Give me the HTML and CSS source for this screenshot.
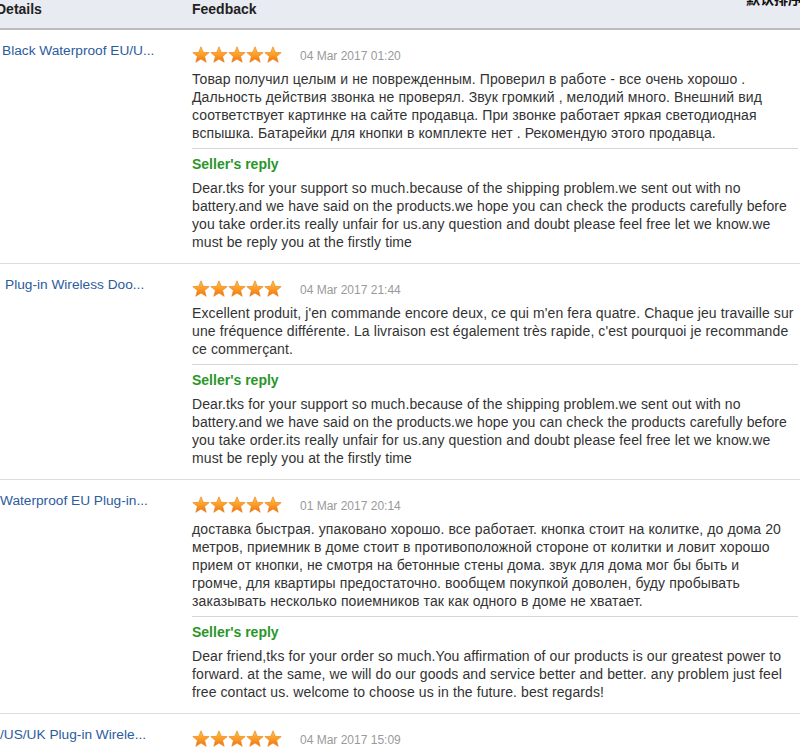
FILE: index.html
```html
<!DOCTYPE html>
<html>
<head>
<meta charset="utf-8">
<link rel="stylesheet" href="styles.css">
</head>
<body>
<svg width="0" height="0" class="defs">
  <defs>
    <linearGradient id="sg" x1="0" y1="0" x2="0" y2="1">
      <stop offset="0" stop-color="#ffc24a"/>
      <stop offset="0.55" stop-color="#fb9a24"/>
      <stop offset="1" stop-color="#ee6f12"/>
    </linearGradient>
    <symbol id="star" viewBox="0 0 18 18">
      <path d="M9 0.8 L11.3 6.3 L17.2 6.6 L12.6 10.4 L14.2 16.3 L9 13.1 L3.8 16.3 L5.4 10.4 L0.8 6.6 L6.7 6.3 Z" fill="url(#sg)" stroke="#e8801c" stroke-width="0.6" stroke-linejoin="round"/>
    </symbol>
  </defs>
</svg>
<div class="page">
  <div class="head">
    <div class="h-details">Details</div>
    <div class="h-feedback">Feedback</div>
    <div class="sort">默认排序</div>
  </div>

  <div class="row">
    <div class="title t1">Black Waterproof EU/U...</div>
    <div class="fb">
      <div class="meta">
        <span class="stars"><svg><use href="#star"/></svg><svg><use href="#star"/></svg><svg><use href="#star"/></svg><svg><use href="#star"/></svg><svg><use href="#star"/></svg></span>
        <span class="date">04 Mar 2017 01:20</span>
      </div>
      <div class="text">Товар получил целым и не поврежденным. Проверил в работе - все очень хорошо . Дальность действия звонка не проверял. Звук громкий , мелодий много. Внешний вид соответствует картинке на сайте продавца. При звонке работает яркая светодиодная вспышка. Батарейки для кнопки в комплекте нет . Рекомендую этого продавца.</div>
      <div class="reply">
        <div class="reply-h">Seller's reply</div>
        <div class="text">Dear.tks for your support so much.because of the shipping problem.we sent out with no battery.and we have said on the products.we hope you can check the products carefully before you take order.its really unfair for us.any question and doubt please feel free let we know.we must be reply you at the firstly time</div>
      </div>
    </div>
  </div>

  <div class="row">
    <div class="title t2">Plug-in Wireless Doo...</div>
    <div class="fb">
      <div class="meta">
        <span class="stars"><svg><use href="#star"/></svg><svg><use href="#star"/></svg><svg><use href="#star"/></svg><svg><use href="#star"/></svg><svg><use href="#star"/></svg></span>
        <span class="date">04 Mar 2017 21:44</span>
      </div>
      <div class="text">Excellent produit, j'en commande encore deux, ce qui m'en fera quatre. Chaque jeu travaille sur une fréquence différente. La livraison est également très rapide, c'est pourquoi je recommande ce commerçant.</div>
      <div class="reply">
        <div class="reply-h">Seller's reply</div>
        <div class="text">Dear.tks for your support so much.because of the shipping problem.we sent out with no battery.and we have said on the products.we hope you can check the products carefully before you take order.its really unfair for us.any question and doubt please feel free let we know.we must be reply you at the firstly time</div>
      </div>
    </div>
  </div>

  <div class="row">
    <div class="title t3">Waterproof EU Plug-in...</div>
    <div class="fb">
      <div class="meta">
        <span class="stars"><svg><use href="#star"/></svg><svg><use href="#star"/></svg><svg><use href="#star"/></svg><svg><use href="#star"/></svg><svg><use href="#star"/></svg></span>
        <span class="date">01 Mar 2017 20:14</span>
      </div>
      <div class="text">доставка быстрая. упаковано хорошо. все работает. кнопка стоит на колитке, до дома 20 метров, приемник в доме стоит в противоположной стороне от колитки и ловит хорошо прием от кнопки, не смотря на бетонные стены дома. звук для дома мог бы быть и<br>громче, для квартиры предостаточно. вообщем покупкой доволен, буду пробывать заказывать несколько поиемников так как одного в доме не хватает.</div>
      <div class="reply">
        <div class="reply-h">Seller's reply</div>
        <div class="text">Dear friend,tks for your order so much.You affirmation of our products is our greatest power to forward. at the same, we will do our goods and service better and better. any problem just feel free contact us. welcome to choose us in the future. best regards!</div>
      </div>
    </div>
  </div>

  <div class="row">
    <div class="title t4">/US/UK Plug-in Wirele...</div>
    <div class="fb">
      <div class="meta">
        <span class="stars"><svg><use href="#star"/></svg><svg><use href="#star"/></svg><svg><use href="#star"/></svg><svg><use href="#star"/></svg><svg><use href="#star"/></svg></span>
        <span class="date">04 Mar 2017 15:09</span>
      </div>
    </div>
  </div>
</div>
</body>
</html>
```

FILE: styles.css
```css
html, body {
  margin: 0;
  padding: 0;
  background: #fff;
  overflow: hidden;
}
.defs {
  position: absolute;
  width: 0;
  height: 0;
}
.page {
  width: 800px;
  font-family: Arial, "Liberation Sans", sans-serif;
  color: #333;
}
.head {
  position: relative;
  display: grid;
  grid-template-columns: 192px 1fr;
  height: 28px;
  background: #e9ebf2;
  border-bottom: 2px solid #bcbcbf;
  font-size: 14px;
  font-weight: bold;
  color: #222;
  line-height: 18px;
}
.h-details {
  margin-left: -4px;
}
.sort {
  position: absolute;
  right: -2px;
  top: -11px;
  font-family: "Noto Sans CJK SC", sans-serif;
  font-size: 14px;
  font-weight: bold;
  color: #111;
  line-height: 18px;
}
.row {
  display: grid;
  grid-template-columns: 192px 1fr;
  border-bottom: 1px solid #dcdcdc;
  padding: 16px 0 12px;
}
.title {
  font-size: 13.7px;
  color: #2b5c9e;
  line-height: 16px;
  margin-top: -3px;
  white-space: nowrap;
}
.t1 { padding-left: 2px; }
.t2 { padding-left: 5px; }
.t3 { padding-left: 0; }
.t4 { padding-left: 0; }
.fb {
  padding-right: 2px;
}
.meta {
  display: flex;
  align-items: center;
  height: 18px;
}
.stars {
  display: flex;
  width: 90px;
}
.stars svg {
  width: 18px;
  height: 18px;
}
.date {
  margin-left: 18px;
  font-size: 12px;
  color: #9a9a9a;
  margin-top: 2px;
}
.text {
  font-size: 14px;
  line-height: 18px;
  letter-spacing: 0.1px;
  color: #333;
}
.meta + .text {
  margin-top: 6px;
}
.reply {
  border-top: 1px solid #d6d6d6;
  margin-top: 6px;
  padding-top: 6px;
}
.reply-h {
  font-size: 14px;
  font-weight: bold;
  color: #2a962a;
  line-height: 18px;
  margin-bottom: 6px;
}
```
